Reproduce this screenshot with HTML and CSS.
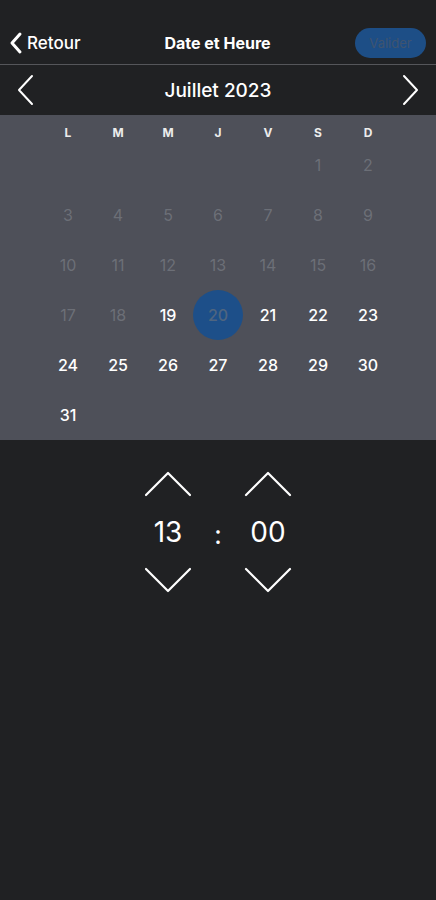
FILE: index.html
```html
<!DOCTYPE html>
<html lang="fr">
<head>
<meta charset="utf-8">
<link rel="stylesheet" href="styles.css">
</head>
<body>
<div class="app">
  <div class="status"></div>
  <header class="topbar">
    <div class="back">
      <svg width="14" height="24" viewBox="0 0 14 24"><path d="M11 3 L3 12 L11 21" fill="none" stroke="#fff" stroke-width="3" stroke-linecap="round" stroke-linejoin="round"/></svg>
      <span>Retour</span>
    </div>
    <div class="title">Date et Heure</div>
    <button class="validate">Valider</button>
  </header>
  <div class="monthbar">
    <svg class="arrow" width="20" height="32" viewBox="0 0 20 32"><path d="M16 2 L3 16 L16 30" fill="none" stroke="#fff" stroke-width="2" stroke-linecap="round" stroke-linejoin="round"/></svg>
    <div class="month">Juillet 2023</div>
    <svg class="arrow" width="20" height="32" viewBox="0 0 20 32"><path d="M4 2 L17 16 L4 30" fill="none" stroke="#fff" stroke-width="2" stroke-linecap="round" stroke-linejoin="round"/></svg>
  </div>
  <section class="calendar">
    <div class="grid heads">
      <div>L</div><div>M</div><div>M</div><div>J</div><div>V</div><div>S</div><div>D</div>
    </div>
    <div class="grid days">
      <div></div><div></div><div></div><div></div><div></div><div class="off">1</div><div class="off">2</div>
      <div class="off">3</div><div class="off">4</div><div class="off">5</div><div class="off">6</div><div class="off">7</div><div class="off">8</div><div class="off">9</div>
      <div class="off">10</div><div class="off">11</div><div class="off">12</div><div class="off">13</div><div class="off">14</div><div class="off">15</div><div class="off">16</div>
      <div class="off">17</div><div class="off">18</div><div>19</div><div class="sel"><span>20</span></div><div>21</div><div>22</div><div>23</div>
      <div>24</div><div>25</div><div>26</div><div>27</div><div>28</div><div>29</div><div>30</div>
      <div>31</div><div></div><div></div><div></div><div></div><div></div><div></div>
    </div>
  </section>
  <section class="time">
    <div class="col">
      <svg width="48" height="26" viewBox="0 0 48 26"><path d="M2 24 L24 2 L46 24" fill="none" stroke="#fff" stroke-width="2.2" stroke-linecap="round" stroke-linejoin="round"/></svg>
      <div class="num">13</div>
      <svg width="48" height="26" viewBox="0 0 48 26"><path d="M2 2 L24 24 L46 2" fill="none" stroke="#fff" stroke-width="2.2" stroke-linecap="round" stroke-linejoin="round"/></svg>
    </div>
    <div class="colon">:</div>
    <div class="col">
      <svg width="48" height="26" viewBox="0 0 48 26"><path d="M2 24 L24 2 L46 24" fill="none" stroke="#fff" stroke-width="2.2" stroke-linecap="round" stroke-linejoin="round"/></svg>
      <div class="num">00</div>
      <svg width="48" height="26" viewBox="0 0 48 26"><path d="M2 2 L24 24 L46 2" fill="none" stroke="#fff" stroke-width="2.2" stroke-linecap="round" stroke-linejoin="round"/></svg>
    </div>
  </section>
</div>
</body>
</html>
```
FILE: styles.css
```css
* { box-sizing: border-box; }
html, body { margin: 0; padding: 0; }
body {
  background: #202123;
  font-family: Inter, "Liberation Sans", sans-serif;
  color: #fff;
  width: 436px;
  height: 900px;
  overflow: hidden;
}
.status { height: 21px; }
.topbar {
  height: 44px;
  display: grid;
  grid-template-columns: 1fr auto 1fr;
  align-items: center;
  padding: 0 10px 0 9px;
  border-bottom: 1px solid #55565a;
}
.back {
  display: flex;
  align-items: center;
  gap: 4px;
  font-size: 17px;
  font-weight: 500;
}
.title {
  font-size: 16px;
  font-weight: 700;
}
.validate {
  justify-self: end;
  width: 71px;
  height: 30px;
  border: none;
  border-radius: 15px;
  background: #1d4e86;
  color: #3f5470;
  font-family: Inter, "Liberation Sans", sans-serif;
  font-size: 13px;
  padding: 0;
}
.monthbar {
  height: 50px;
  display: flex;
  align-items: center;
  justify-content: space-between;
  padding: 0 16px;
}
.month {
  font-size: 19px;
  font-weight: 500;
}
.calendar {
  background: #4e5059;
  height: 325px;
  padding-top: 11px;
}
.grid {
  width: 350px;
  margin: 0 auto;
  display: grid;
  grid-template-columns: repeat(7, 50px);
}
.heads div {
  height: 14px;
  line-height: 14px;
  text-align: center;
  font-size: 12px;
  font-weight: 700;
  color: #ececec;
}
.days div {
  height: 50px;
  display: flex;
  align-items: center;
  justify-content: center;
  font-size: 16px;
  font-weight: 500;
  color: #fff;
}
.days .off { color: #6c6f77; font-weight: 400; }
.days .sel span {
  width: 50px;
  height: 50px;
  border-radius: 50%;
  background: #1d4f89;
  color: #4f6580;
  display: flex;
  align-items: center;
  justify-content: center;
}
.time {
  display: flex;
  justify-content: center;
  align-items: center;
  padding-top: 31px;
}
.col {
  width: 50px;
  display: flex;
  flex-direction: column;
  align-items: center;
}
.num {
  font-size: 28px;
  font-weight: 400;
  height: 70px;
  line-height: 70px;
}
.colon {
  width: 50px;
  text-align: center;
  font-size: 26px;
  padding-top: 4px;
}
```
